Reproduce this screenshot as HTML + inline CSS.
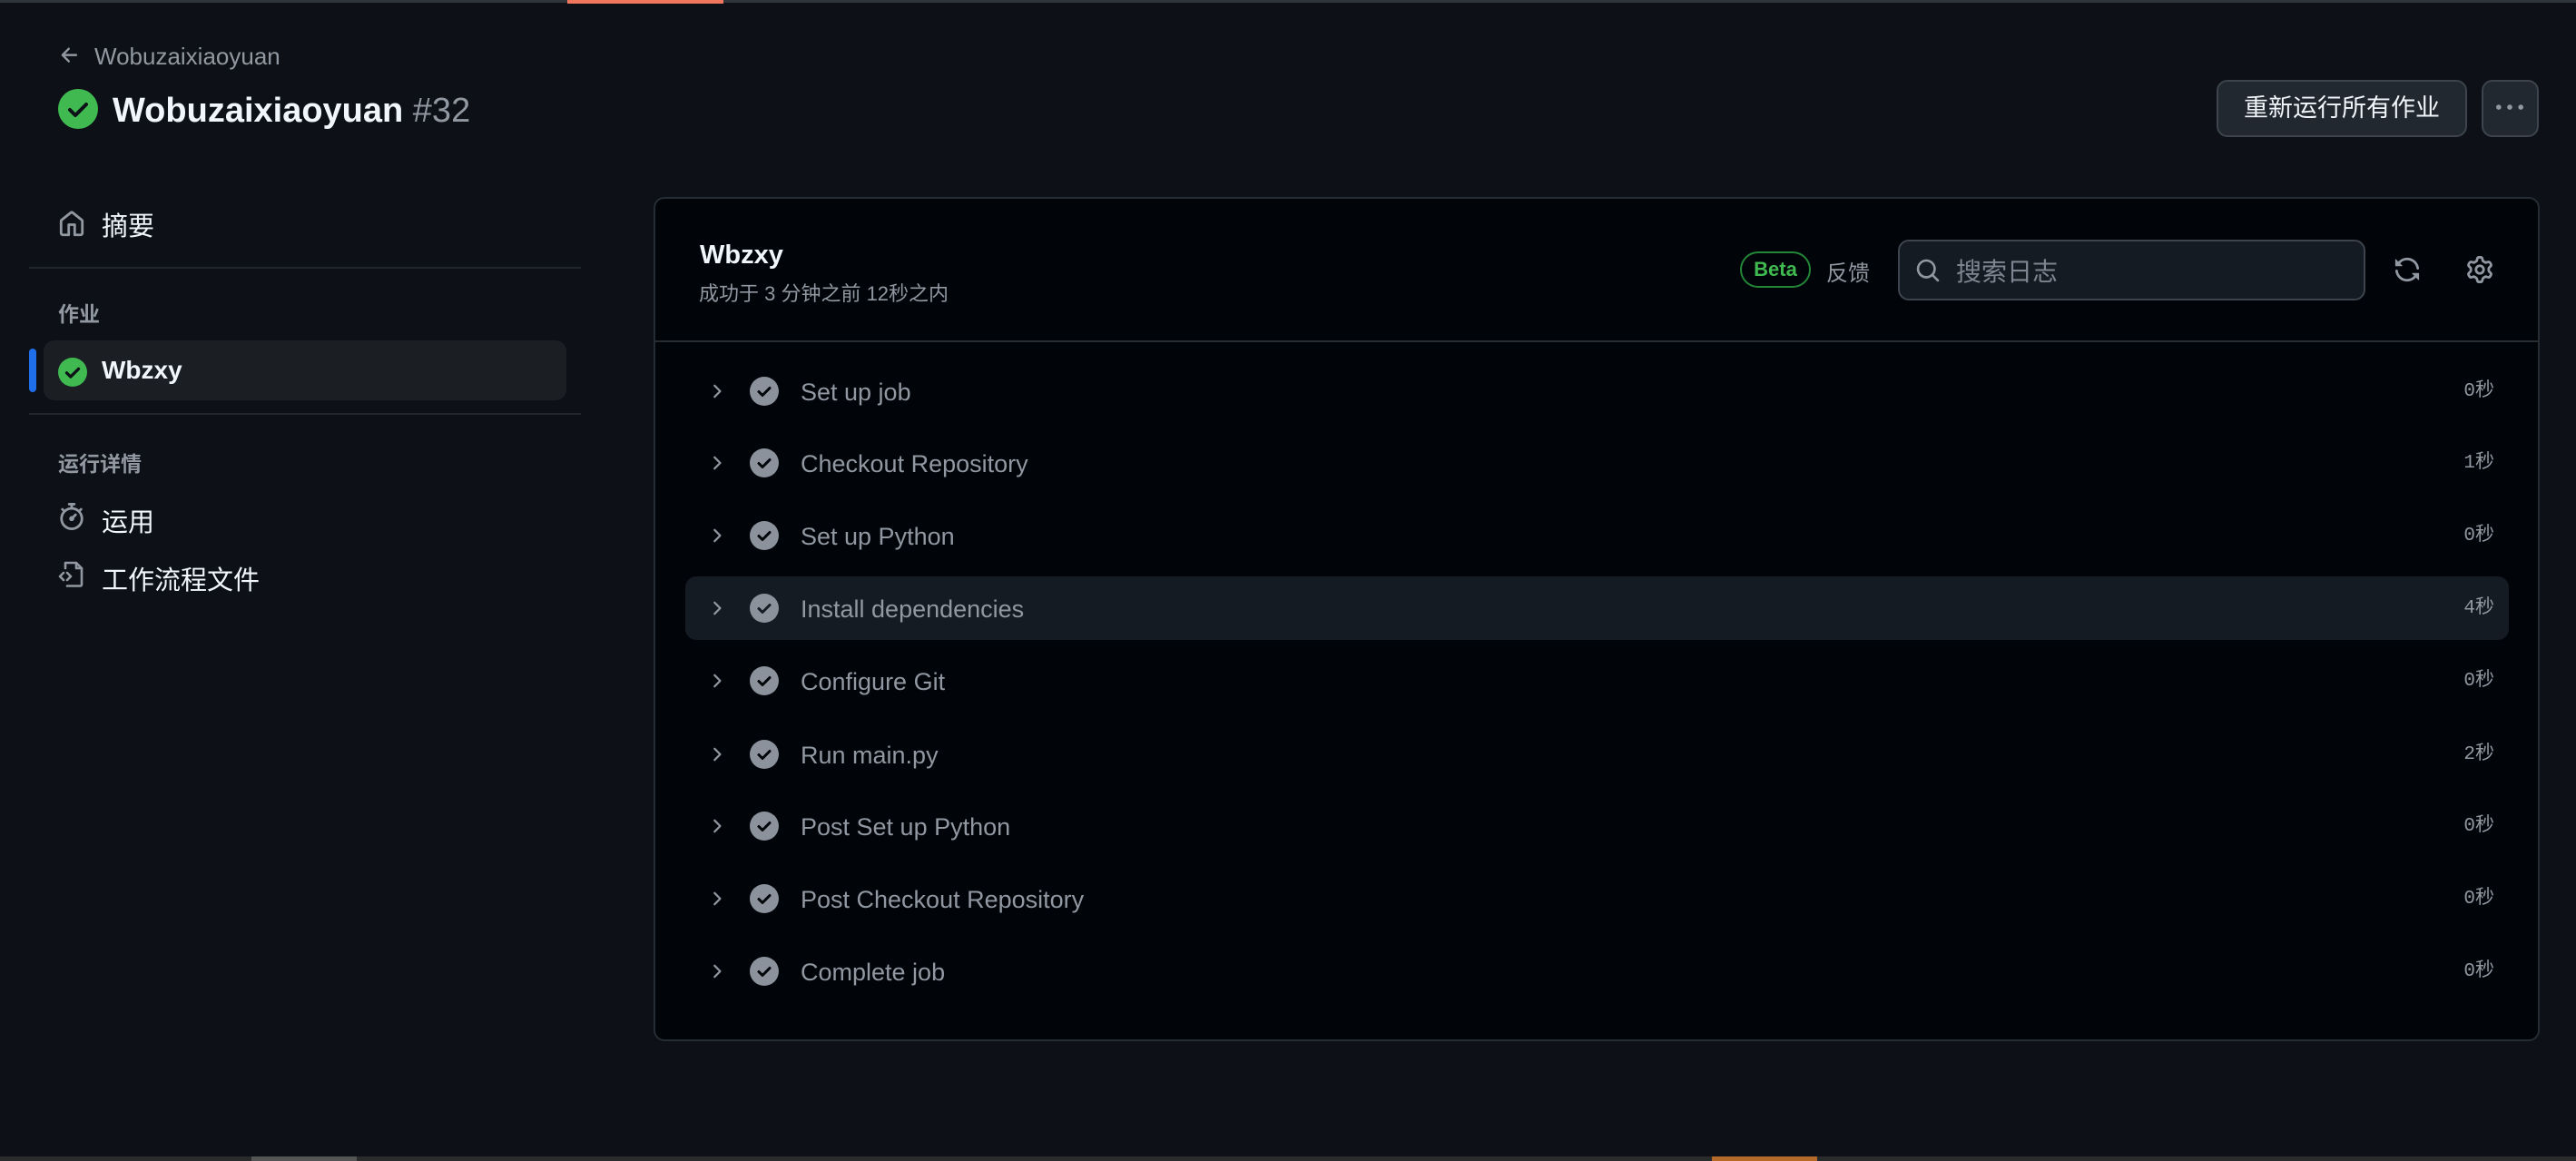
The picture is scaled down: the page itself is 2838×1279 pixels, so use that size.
<!DOCTYPE html>
<html><head><meta charset="utf-8"><style>
*{margin:0;padding:0;box-sizing:border-box}
body{width:2838px;height:1279px;background:#0d1117;font-family:"Liberation Sans","Noto Sans CJK SC",sans-serif;color:#f0f6fc;position:relative;overflow:hidden}
.a{position:absolute}
.g{color:#9198a1}
.row{position:absolute;left:755px;width:2009px;height:70px}
.row .chev{position:absolute;left:24px;top:24px}
.row .ck{position:absolute;left:71px;top:19px;width:32px;height:32px;border-radius:50%;background:#8b929c}
.row .t{position:absolute;left:127px;top:0;line-height:72px;font-size:27px;color:#9198a1}
.row .d{position:absolute;right:16px;top:0;line-height:72px;font-size:21px;font-family:"Liberation Mono","Noto Sans CJK SC",monospace;color:#9198a1}
</style></head><body>
<div class="a" style="left:0;top:0;width:2838px;height:3px;background:#2f353d"></div>
<div class="a" style="left:625px;top:0;width:172px;height:4px;background:#f0765e"></div>
<div class="a" style="left:0;top:1274px;width:2838px;height:5px;background:#2a2b2d"></div>
<div class="a" style="left:277px;top:1274px;width:116px;height:5px;background:#555"></div>
<div class="a" style="left:1886px;top:1274px;width:116px;height:5px;background:#b5692a"></div>

<svg class="a" style="left:64px;top:48px" width="26" height="26" viewBox="0 0 16 16"><path d="M7.78 12.53a.75.75 0 0 1-1.06 0L2.47 8.28a.75.75 0 0 1 0-1.06l4.25-4.25a.75.75 0 0 1 1.06 1.06L4.81 7h7.44a.75.75 0 0 1 0 1.5H4.81l2.97 2.97a.75.75 0 0 1 0 1.06Z" fill="#9198a1"/></svg>
<div class="a g" style="left:104px;top:47px;font-size:26px">Wobuzaixiaoyuan</div>
<svg class="a" style="left:64px;top:98px" width="44" height="44" viewBox="0 0 44 44"><circle cx="22" cy="22" r="22" fill="#3fb950"/><path d="M13 23l6 6 12-12" stroke="#0d1117" stroke-width="4" fill="none" stroke-linecap="round" stroke-linejoin="round"/></svg>
<div class="a" style="left:124px;top:99px;font-size:38px;font-weight:bold;line-height:46px">Wobuzaixiaoyuan <span class="g" style="font-weight:normal">#32</span></div>

<svg class="a" style="left:64px;top:232px" width="30" height="30" viewBox="0 0 16 16"><path d="M6.906.664a1.749 1.749 0 0 1 2.187 0l5.25 4.2c.415.332.657.835.657 1.367v7.019A1.75 1.75 0 0 1 13.25 15h-3.5a.75.75 0 0 1-.75-.75V9H7v5.25a.75.75 0 0 1-.75.75h-3.5A1.75 1.75 0 0 1 1 13.25V6.23c0-.531.242-1.034.657-1.366l5.25-4.2Zm1.25 1.171a.25.25 0 0 0-.312 0l-5.25 4.2a.25.25 0 0 0-.094.196v7.019c0 .138.112.25.25.25H5.5V8.25a.75.75 0 0 1 .75-.75h3.5a.75.75 0 0 1 .75.75v5.25h2.75a.25.25 0 0 0 .25-.25V6.23a.25.25 0 0 0-.094-.195Z" fill="#9198a1"/></svg>
<div class="a" style="left:112px;top:226px;font-size:29px">摘要</div>
<div class="a" style="left:32px;top:294px;width:608px;height:2px;background:#21262d"></div>
<div class="a g" style="left:64px;top:327px;font-size:23px;font-weight:bold">作业</div>
<div class="a" style="left:32px;top:384px;width:8px;height:48px;border-radius:4px;background:#1f6feb"></div>
<div class="a" style="left:48px;top:375px;width:576px;height:66px;border-radius:12px;background:#1b1f24"></div>
<svg class="a" style="left:64px;top:394px" width="32" height="32" viewBox="0 0 44 44"><circle cx="22" cy="22" r="22" fill="#3fb950"/><path d="M13 23l6 6 12-12" stroke="#0d1117" stroke-width="4.5" fill="none" stroke-linecap="round" stroke-linejoin="round"/></svg>
<div class="a" style="left:112px;top:392px;font-size:28px;font-weight:bold">Wbzxy</div>
<div class="a" style="left:32px;top:455px;width:608px;height:2px;background:#21262d"></div>
<div class="a g" style="left:64px;top:492px;font-size:23px;font-weight:bold">运行详情</div>
<svg class="a" style="left:64px;top:554px" width="30" height="30" viewBox="0 0 16 16"><path d="M5.75.75A.75.75 0 0 1 6.5 0h3a.75.75 0 0 1 0 1.5h-.75v1l-.001.041a6.724 6.724 0 0 1 3.464 1.435l.007-.006.75-.75a.749.749 0 0 1 1.275.326.749.749 0 0 1-.215.734l-.75.75-.006.007a6.75 6.75 0 1 1-10.548 0L2.72 5.03l-.75-.75a.751.751 0 0 1 .018-1.042.751.751 0 0 1 1.042-.018l.75.75.007.006A6.72 6.72 0 0 1 7.25 2.541V1.5H6.5a.75.75 0 0 1-.75-.75ZM8 14.5A5.25 5.25 0 1 0 8 4a5.25 5.25 0 0 0 0 10.5Zm.389-6.7 1.33-1.33a.75.75 0 1 1 1.061 1.06L9.45 8.861A1.503 1.503 0 0 1 8 10.75a1.499 1.499 0 1 1 .389-2.95Z" fill="#9198a1"/></svg>
<div class="a" style="left:112px;top:552px;font-size:29px">运用</div>
<svg class="a" style="left:63px;top:617px" width="32" height="32" viewBox="0 0 32 32" fill="none" stroke="#9198a1" stroke-width="2.6" stroke-linejoin="round" stroke-linecap="round"><path d="M9 9V3h12l6 6v18a1.5 1.5 0 0 1-1.5 1.5H11"/><path d="M21 3v6h6"/><path d="M7 14l-4 4 4 4"/><path d="M11 14l4 4-4 4"/></svg>
<div class="a" style="left:112px;top:616px;font-size:29px">工作流程文件</div>

<div class="a" style="left:2442px;top:88px;width:276px;height:63px;border-radius:12px;background:#212830;border:2px solid #3d444d;text-align:center;line-height:59px;font-size:27px">重新运行所有作业</div>
<div class="a" style="left:2734px;top:88px;width:63px;height:63px;border-radius:12px;background:#212830;border:2px solid #3d444d"></div>
<svg class="a" style="left:2750px;top:104px" width="30" height="30" viewBox="0 0 16 16"><path d="M8 9a1.5 1.5 0 1 0 0-3 1.5 1.5 0 0 0 0 3ZM1.5 9a1.5 1.5 0 1 0 0-3 1.5 1.5 0 0 0 0 3Zm13 0a1.5 1.5 0 1 0 0-3 1.5 1.5 0 0 0 0 3Z" fill="#9198a1"/></svg>

<div class="a" style="left:720px;top:217px;width:2078px;height:930px;border-radius:12px;background:#010409;border:2px solid #262c33"></div>
<div class="a" style="left:771px;top:265px;font-size:29px;font-weight:bold">Wbzxy</div>
<div class="a g" style="left:770px;top:306px;font-size:22px">成功于 3 分钟之前 12秒之内</div>
<div class="a" style="left:722px;top:375px;width:2074px;height:2px;background:#262c33"></div>
<div class="a" style="left:1917px;top:277px;width:78px;height:40px;border-radius:20px;border:2px solid #238636;color:#3fb950;font-size:22px;font-weight:bold;text-align:center;line-height:36px">Beta</div>
<div class="a g" style="left:2012px;top:281px;font-size:24px">反馈</div>
<div class="a" style="left:2091px;top:264px;width:515px;height:67px;border-radius:12px;background:#151b23;border:2px solid #3d444d"></div>
<svg class="a" style="left:2110px;top:284px" width="28" height="28" viewBox="0 0 16 16"><path d="M10.68 11.74a6 6 0 0 1-7.922-8.982 6 6 0 0 1 8.982 7.922l3.04 3.04a.749.749 0 0 1-.326 1.275.749.749 0 0 1-.734-.215ZM11.5 7a4.499 4.499 0 1 0-8.997 0A4.499 4.499 0 0 0 11.5 7Z" fill="#9198a1"/></svg>
<div class="a" style="left:2155px;top:278px;font-size:28px;color:#7d8590">搜索日志</div>
<svg class="a" style="left:2637px;top:282px" width="30" height="30" viewBox="0 0 16 16"><path d="M1.705 8.005a.75.75 0 0 1 .834.656 5.5 5.5 0 0 0 9.592 2.97l-1.204-1.204a.25.25 0 0 1 .177-.427h3.646a.25.25 0 0 1 .25.25v3.646a.25.25 0 0 1-.427.177l-1.38-1.38A7.002 7.002 0 0 1 1.05 8.84a.75.75 0 0 1 .656-.834ZM8 2.5a5.487 5.487 0 0 0-4.131 1.869l1.204 1.204A.25.25 0 0 1 4.896 6H1.25A.25.25 0 0 1 1 5.75V2.104a.25.25 0 0 1 .427-.177l1.38 1.38A7.002 7.002 0 0 1 14.95 7.160a.75.75 0 0 1-1.49.178A5.5 5.5 0 0 0 8 2.5Z" fill="#9198a1"/></svg>
<svg class="a" style="left:2717px;top:282px" width="30" height="30" viewBox="0 0 16 16"><path d="M8 0a8.2 8.2 0 0 1 .701.031C9.444.095 9.99.645 10.160 1.290l.288 1.107c.018.066.079.158.212.224.231.114.454.243.668.386.123.082.233.09.299.071l1.103-.303c.644-.176 1.392.021 1.820.63.27.385.506.792.704 1.218.315.675.111 1.422-.364 1.891l-.814.806c-.049.048-.098.147-.088.294.016.257.016.515 0 .772-.01.147.038.246.088.294l.814.806c.475.469.679 1.216.364 1.891a7.977 7.977 0 0 1-.704 1.217c-.428.61-1.176.807-1.820.63l-1.102-.302c-.067-.019-.177-.011-.3.071a5.909 5.909 0 0 1-.668.386c-.133.066-.194.158-.211.224l-.29 1.106c-.168.646-.715 1.196-1.458 1.260a8.006 8.006 0 0 1-1.402 0c-.743-.064-1.289-.614-1.458-1.260l-.289-1.106c-.018-.066-.079-.158-.212-.224a5.738 5.738 0 0 1-.668-.386c-.123-.082-.233-.09-.299-.071l-1.103.303c-.644.176-1.392-.021-1.820-.63a8.12 8.12 0 0 1-.704-1.218c-.315-.675-.111-1.422.363-1.891l.815-.806c.05-.048.098-.147.088-.294a6.214 6.214 0 0 1 0-.772c.01-.147-.038-.246-.088-.294l-.815-.806C.635 6.045.431 5.298.746 4.623a7.92 7.92 0 0 1 .704-1.217c.428-.61 1.176-.807 1.820-.63l1.102.302c.067.019.177.011.3-.071.214-.143.437-.272.668-.386.133-.066.194-.158.211-.224l.29-1.106C6.009.645 6.556.095 7.299.03 7.530.01 7.764 0 8 0Zm-.571 1.525c-.036.003-.108.036-.137.146l-.289 1.105c-.147.561-.549.967-.998 1.189-.173.086-.34.183-.5.29-.417.278-.97.423-1.529.27l-1.103-.303c-.109-.03-.175.016-.195.045-.22.312-.412.644-.573.99-.014.031-.021.11.059.19l.815.806c.411.406.562.957.53 1.456a4.709 4.709 0 0 0 0 .582c.032.499-.119 1.05-.53 1.456l-.815.806c-.081.08-.073.159-.059.19.162.346.353.677.573.989.02.03.085.076.195.046l1.102-.303c.56-.153 1.113-.008 1.53.27.161.107.328.204.501.29.447.222.85.629.997 1.189l.289 1.105c.029.109.101.143.137.146a6.6 6.6 0 0 0 1.142 0c.036-.003.108-.036.137-.146l.289-1.105c.147-.561.549-.967.998-1.189.173-.086.34-.183.5-.29.417-.278.97-.423 1.529-.27l1.103.303c.109.029.175-.016.195-.045.22-.313.411-.644.573-.99.014-.031.021-.11-.059-.19l-.815-.806c-.411-.406-.562-.957-.53-1.456a4.709 4.709 0 0 0 0-.582c-.032-.499.119-1.05.53-1.456l.815-.806c.081-.08.073-.159.059-.19a6.464 6.464 0 0 0-.573-.989c-.02-.03-.085-.076-.195-.046l-1.102.303c-.56.153-1.113.008-1.53-.27a4.44 4.44 0 0 0-.501-.29c-.447-.222-.85-.629-.997-1.189l-.289-1.105c-.029-.11-.101-.143-.137-.146a6.6 6.6 0 0 0-1.142 0ZM11 8a3 3 0 1 1-6 0 3 3 0 0 1 6 0ZM9.5 8a1.5 1.5 0 1 0-3.001.001A1.5 1.5 0 0 0 9.5 8Z" fill="#9198a1"/></svg>

<div class="row" style="top:635px;height:70px;background:#151b23;border-radius:12px"></div>

<div class="row" style="top:396px"><svg class="chev" width="22" height="22" viewBox="0 0 16 16"><path d="M6 3.5l4.5 4.5L6 12.5" stroke="#9198a1" stroke-width="1.6" fill="none" stroke-linecap="round" stroke-linejoin="round"/></svg><div class="ck"><svg width="32" height="32" viewBox="0 0 32 32"><path d="M10 16.5l4 4 8-8" stroke="#010409" stroke-width="3" fill="none" stroke-linecap="round" stroke-linejoin="round"/></svg></div><div class="t">Set up job</div><div class="d">0秒</div></div>
<div class="row" style="top:475px"><svg class="chev" width="22" height="22" viewBox="0 0 16 16"><path d="M6 3.5l4.5 4.5L6 12.5" stroke="#9198a1" stroke-width="1.6" fill="none" stroke-linecap="round" stroke-linejoin="round"/></svg><div class="ck"><svg width="32" height="32" viewBox="0 0 32 32"><path d="M10 16.5l4 4 8-8" stroke="#010409" stroke-width="3" fill="none" stroke-linecap="round" stroke-linejoin="round"/></svg></div><div class="t">Checkout Repository</div><div class="d">1秒</div></div>
<div class="row" style="top:555px"><svg class="chev" width="22" height="22" viewBox="0 0 16 16"><path d="M6 3.5l4.5 4.5L6 12.5" stroke="#9198a1" stroke-width="1.6" fill="none" stroke-linecap="round" stroke-linejoin="round"/></svg><div class="ck"><svg width="32" height="32" viewBox="0 0 32 32"><path d="M10 16.5l4 4 8-8" stroke="#010409" stroke-width="3" fill="none" stroke-linecap="round" stroke-linejoin="round"/></svg></div><div class="t">Set up Python</div><div class="d">0秒</div></div>
<div class="row" style="top:635px"><svg class="chev" width="22" height="22" viewBox="0 0 16 16"><path d="M6 3.5l4.5 4.5L6 12.5" stroke="#9198a1" stroke-width="1.6" fill="none" stroke-linecap="round" stroke-linejoin="round"/></svg><div class="ck"><svg width="32" height="32" viewBox="0 0 32 32"><path d="M10 16.5l4 4 8-8" stroke="#151b23" stroke-width="3" fill="none" stroke-linecap="round" stroke-linejoin="round"/></svg></div><div class="t">Install dependencies</div><div class="d">4秒</div></div>
<div class="row" style="top:715px"><svg class="chev" width="22" height="22" viewBox="0 0 16 16"><path d="M6 3.5l4.5 4.5L6 12.5" stroke="#9198a1" stroke-width="1.6" fill="none" stroke-linecap="round" stroke-linejoin="round"/></svg><div class="ck"><svg width="32" height="32" viewBox="0 0 32 32"><path d="M10 16.5l4 4 8-8" stroke="#010409" stroke-width="3" fill="none" stroke-linecap="round" stroke-linejoin="round"/></svg></div><div class="t">Configure Git</div><div class="d">0秒</div></div>
<div class="row" style="top:796px"><svg class="chev" width="22" height="22" viewBox="0 0 16 16"><path d="M6 3.5l4.5 4.5L6 12.5" stroke="#9198a1" stroke-width="1.6" fill="none" stroke-linecap="round" stroke-linejoin="round"/></svg><div class="ck"><svg width="32" height="32" viewBox="0 0 32 32"><path d="M10 16.5l4 4 8-8" stroke="#010409" stroke-width="3" fill="none" stroke-linecap="round" stroke-linejoin="round"/></svg></div><div class="t">Run main.py</div><div class="d">2秒</div></div>
<div class="row" style="top:875px"><svg class="chev" width="22" height="22" viewBox="0 0 16 16"><path d="M6 3.5l4.5 4.5L6 12.5" stroke="#9198a1" stroke-width="1.6" fill="none" stroke-linecap="round" stroke-linejoin="round"/></svg><div class="ck"><svg width="32" height="32" viewBox="0 0 32 32"><path d="M10 16.5l4 4 8-8" stroke="#010409" stroke-width="3" fill="none" stroke-linecap="round" stroke-linejoin="round"/></svg></div><div class="t">Post Set up Python</div><div class="d">0秒</div></div>
<div class="row" style="top:955px"><svg class="chev" width="22" height="22" viewBox="0 0 16 16"><path d="M6 3.5l4.5 4.5L6 12.5" stroke="#9198a1" stroke-width="1.6" fill="none" stroke-linecap="round" stroke-linejoin="round"/></svg><div class="ck"><svg width="32" height="32" viewBox="0 0 32 32"><path d="M10 16.5l4 4 8-8" stroke="#010409" stroke-width="3" fill="none" stroke-linecap="round" stroke-linejoin="round"/></svg></div><div class="t">Post Checkout Repository</div><div class="d">0秒</div></div>
<div class="row" style="top:1035px"><svg class="chev" width="22" height="22" viewBox="0 0 16 16"><path d="M6 3.5l4.5 4.5L6 12.5" stroke="#9198a1" stroke-width="1.6" fill="none" stroke-linecap="round" stroke-linejoin="round"/></svg><div class="ck"><svg width="32" height="32" viewBox="0 0 32 32"><path d="M10 16.5l4 4 8-8" stroke="#010409" stroke-width="3" fill="none" stroke-linecap="round" stroke-linejoin="round"/></svg></div><div class="t">Complete job</div><div class="d">0秒</div></div>
</body></html>
